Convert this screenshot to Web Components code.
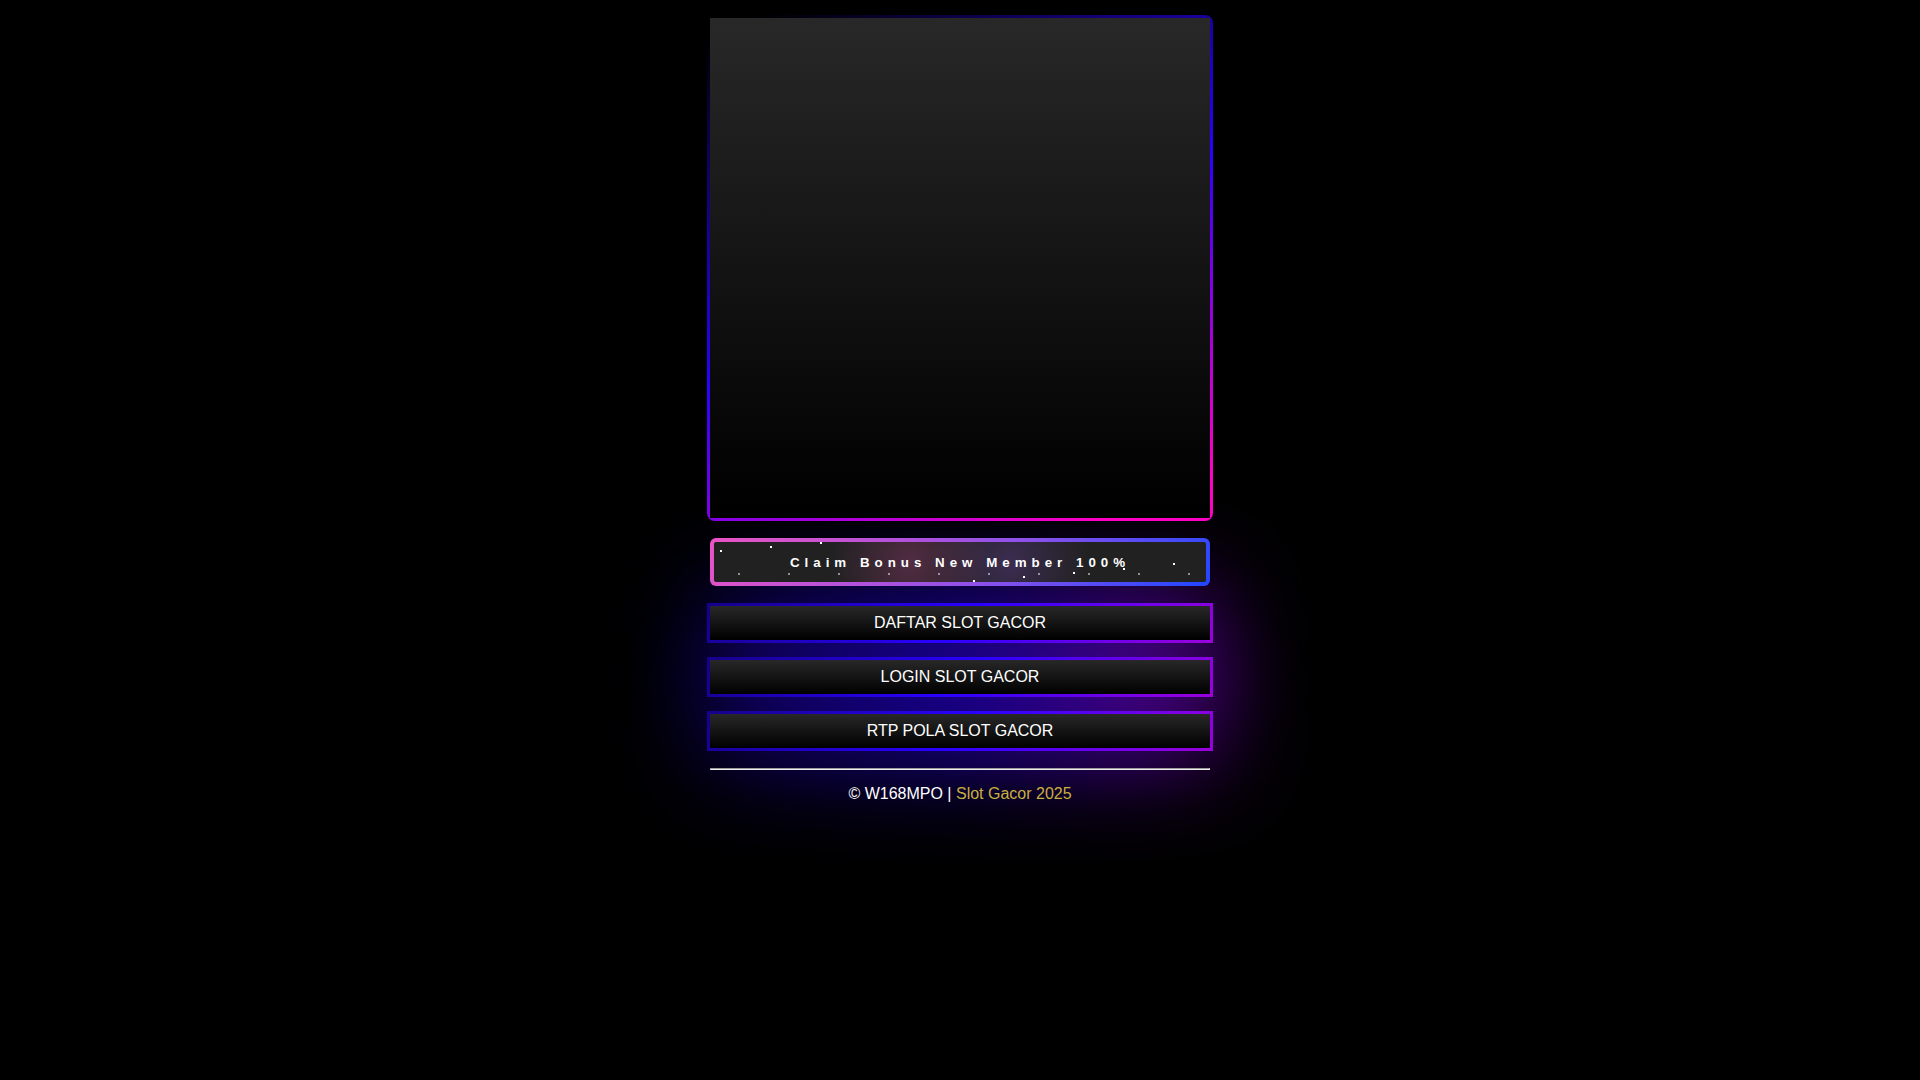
<!DOCTYPE html>
<html lang="id">
<head>
<meta charset="utf-8">
<meta name="viewport" content="width=device-width, initial-scale=1">
<title>W168MPO</title>
<style>
  body {
    margin: 0;
    background: #000;
    color: #fff;
    font: 16px/24px "Liberation Sans", Arial, sans-serif;
  }
</style>
</head>
<body>
<landing-page>
  <hero-panel></hero-panel>
  <bonus-button>Claim Bonus New Member 100%</bonus-button>
  <glow-link href="#daftar">DAFTAR SLOT GACOR</glow-link>
  <glow-link href="#login">LOGIN SLOT GACOR</glow-link>
  <glow-link href="#rtp">RTP POLA SLOT GACOR</glow-link>
  <page-footer>© W168MPO | <footer-link href="#slot">Slot Gacor 2025</footer-link></page-footer>
</landing-page>

<script>
class LandingPage extends HTMLElement {
  constructor() {
    super();
    this.attachShadow({ mode: "open" }).innerHTML = `
      <style>
        :host { display: block; overflow: hidden; }
        main {
          display: flex;
          flex-direction: column;
          gap: 20px;
          max-width: 500px;
          margin: 0 auto;
          padding: 18px 10px 160px;
          isolation: isolate;
        }
      </style>
      <main><slot></slot></main>
    `;
  }
}
customElements.define("landing-page", LandingPage);

class HeroPanel extends HTMLElement {
  constructor() {
    super();
    this.attachShadow({ mode: "open" }).innerHTML = `
      <style>
        :host {
          display: block;
          position: relative;
          aspect-ratio: 1;
        }
        .frame {
          position: absolute;
          inset: -3px;
          border-radius: 8px;
          background: linear-gradient(155deg, #000 3%, #2a00ff 50%, #ff00c4 93%);
        }
        .fill {
          position: relative;
          height: 100%;
          background: linear-gradient(#282828, #000 98%);
        }
      </style>
      <div class="frame"></div>
      <div class="fill"></div>
    `;
  }
}
customElements.define("hero-panel", HeroPanel);

class BonusButton extends HTMLElement {
  constructor() {
    super();
    this.attachShadow({ mode: "open" }).innerHTML = `
      <style>
        :host { display: block; }
        button {
          display: block;
          position: relative;
          width: 100%;
          height: 48px;
          padding: 0;
          border: 4px double transparent;
          border-radius: 6px;
          overflow: hidden;
          cursor: pointer;
          color: #fff;
          font-family: "Liberation Sans", Arial, sans-serif;
          font-weight: bold;
          letter-spacing: 5px;
          background-image:
            radial-gradient(circle 80px at 40% 50%, rgba(254, 83, 186, 0.22), transparent),
            radial-gradient(circle 80px at 60% 50%, rgba(143, 81, 234, 0.24), transparent),
            linear-gradient(#212121, #212121),
            linear-gradient(137deg, #ec53c4 0%, #8f51ea 57%, #2046ff 100%);
          background-origin: padding-box, padding-box, border-box, border-box;
          background-clip: padding-box, padding-box, padding-box, border-box;
        }
        svg {
          position: absolute;
          inset: 0;
          width: 100%;
          height: 100%;
        }
      </style>
      <button type="button">
        <slot></slot>
        <svg fill="#fff" aria-hidden="true">
          <g></g>
        </svg>
      </button>
    `;
    const near = [[6, 8], [56, 4], [106, 0], [259, 38], [309, 34], [359, 30], [409, 26], [459, 21]];
    let stars = near.map(([x, y]) => `<rect x="${x}" y="${y}" width="2" height="2"/>`).join("");
    for (let x = 24; x < 490; x += 50) {
      stars += `<rect x="${x}" y="31" width="2" height="2" opacity="0.5"/>`;
    }
    this.shadowRoot.querySelector("g").innerHTML = stars;
  }
}
customElements.define("bonus-button", BonusButton);

class GlowLink extends HTMLElement {
  constructor() {
    super();
    this.attachShadow({ mode: "open" }).innerHTML = `
      <style>
        :host { display: block; position: relative; }
        .frame, .glow {
          position: absolute;
          inset: -3px;
          background: linear-gradient(135deg, #16008a, #2a00ff 50%, #9c00dc);
        }
        /* all the glows stay under every link of the page */
        .glow { z-index: -1; filter: blur(50px); }
        a {
          display: block;
          position: relative;
          height: 34px;
          line-height: 34px;
          text-align: center;
          text-decoration: none;
          color: #fff;
          background: linear-gradient(#282828, #000);
        }
      </style>
      <div class="glow"></div>
      <div class="frame"></div>
      <a href="${this.getAttribute("href")}"><slot></slot></a>
    `;
  }
}
customElements.define("glow-link", GlowLink);

class PageFooter extends HTMLElement {
  constructor() {
    super();
    this.attachShadow({ mode: "open" }).innerHTML = `
      <style>
        :host { display: block; text-align: center; }
        hr { margin: 0 0 12px; border: 1px inset; color: #fff; }
      </style>
      <hr>
      <slot></slot>
    `;
  }
}
customElements.define("page-footer", PageFooter);

class FooterLink extends HTMLElement {
  constructor() {
    super();
    this.attachShadow({ mode: "open" }).innerHTML = `
      <style>
        :host { display: inline; }
        a { color: #c9b040; text-decoration: none; }
      </style>
      <a href="${this.getAttribute("href")}"><slot></slot></a>
    `;
  }
}
customElements.define("footer-link", FooterLink);
</script>
</body>
</html>
